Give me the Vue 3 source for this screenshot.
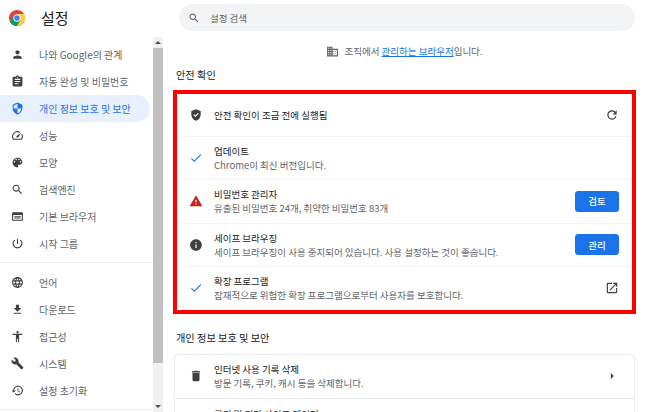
<script setup>
const icons = {
  person: 'M12 12c2.21 0 4-1.79 4-4s-1.79-4-4-4-4 1.79-4 4 1.79 4 4 4zm0 2c-2.67 0-8 1.34-8 4v2h16v-2c0-2.66-5.33-4-8-4z',
  assignment: 'M19 3h-4.18C14.4 1.84 13.3 1 12 1c-1.3 0-2.4.84-2.82 2H5c-1.1 0-2 .9-2 2v14c0 1.1.9 2 2 2h14c1.1 0 2-.9 2-2V5c0-1.1-.9-2-2-2zm-7 0c.55 0 1 .45 1 1s-.45 1-1 1-1-.45-1-1 .45-1 1-1zm2 14H7v-2h7v2zm3-4H7v-2h10v2zm0-4H7V7h10v2z',
  security: 'M12 1L3 5v6c0 5.55 3.84 10.74 9 12 5.16-1.26 9-6.45 9-12V5l-9-4zm0 10.99h7c-.53 4.12-3.28 7.79-7 8.94V12H5V6.3l7-3.11v8.8z',
  speed: 'M20.38 8.57l-1.23 1.85a8 8 0 0 1-.22 7.58H5.07A8 8 0 0 1 15.58 6.85l1.85-1.23A10 10 0 0 0 3.35 19a2 2 0 0 0 1.72 1h13.85a2 2 0 0 0 1.74-1 10 10 0 0 0-.27-10.44zm-9.79 6.84a2 2 0 0 0 2.83 0l5.66-8.49-8.49 5.66a2 2 0 0 0 0 2.83z',
  palette: 'M12 3c-4.97 0-9 4.03-9 9s4.03 9 9 9c.83 0 1.5-.67 1.5-1.5 0-.39-.15-.74-.39-1.01-.23-.26-.38-.61-.38-.99 0-.83.67-1.5 1.5-1.5H16c2.76 0 5-2.24 5-5 0-4.42-4.03-8-9-8zm-5.5 9c-.83 0-1.5-.67-1.5-1.5S5.67 9 6.5 9 8 9.67 8 10.5 7.33 12 6.5 12zm3-4C8.67 8 8 7.33 8 6.5S8.67 5 9.5 5s1.5.67 1.5 1.5S10.33 8 9.5 8zm5 0c-.83 0-1.5-.67-1.5-1.5S13.67 5 14.5 5s1.5.67 1.5 1.5S15.33 8 14.5 8zm3 4c-.83 0-1.5-.67-1.5-1.5S16.67 9 17.5 9s1.5.67 1.5 1.5-.67 1.5-1.5 1.5z',
  search: 'M15.5 14h-.79l-.28-.27C15.41 12.59 16 11.11 16 9.5 16 5.91 13.09 3 9.5 3S3 5.91 3 9.5 5.91 16 9.5 16c1.61 0 3.09-.59 4.23-1.57l.27.28v.79l5 4.99L20.49 19l-4.99-5zm-6 0C7.01 14 5 11.99 5 9.5S7.01 5 9.5 5 14 7.01 14 9.5 11.99 14 9.5 14z',
  asset: 'M20 4H4c-1.11 0-2 .9-2 2v12c0 1.1.89 2 2 2h16c1.1 0 2-.9 2-2V6c0-1.1-.89-2-2-2zm0 14H4V9h16v9zM6 11h12v1.5H6zm0 3h12v1.5H6z',
  power: 'M13 3h-2v10h2V3zm4.83 2.17l-1.42 1.42C17.99 7.86 19 9.81 19 12c0 3.87-3.13 7-7 7s-7-3.13-7-7c0-2.19 1.01-4.14 2.58-5.42L6.17 5.17C4.23 6.82 3 9.26 3 12c0 4.97 4.03 9 9 9s9-4.03 9-9c0-2.74-1.23-5.18-3.17-6.83z',
  language: 'M11.99 2C6.47 2 2 6.48 2 12s4.47 10 9.99 10C17.52 22 22 17.52 22 12S17.52 2 11.99 2zm6.93 6h-2.95c-.32-1.25-.78-2.45-1.38-3.56 1.84.63 3.37 1.91 4.33 3.56zM12 4.04c.83 1.2 1.48 2.53 1.91 3.96h-3.82c.43-1.43 1.08-2.76 1.91-3.96zM4.26 14C4.1 13.36 4 12.69 4 12s.1-1.36.26-2h3.38c-.08.66-.14 1.32-.14 2 0 .68.06 1.34.14 2H4.26zm.82 2h2.95c.32 1.25.78 2.45 1.38 3.56-1.84-.63-3.37-1.9-4.33-3.56zm2.95-8H5.08c.96-1.66 2.49-2.93 4.33-3.56C8.81 5.55 8.35 6.75 8.03 8zM12 19.96c-.83-1.2-1.48-2.53-1.91-3.96h3.82c-.43 1.43-1.08 2.76-1.91 3.96zM14.34 14H9.66c-.09-.66-.16-1.32-.16-2 0-.68.07-1.35.16-2h4.68c.09.65.16 1.32.16 2 0 .68-.07 1.34-.16 2zm.25 5.56c.6-1.11 1.06-2.31 1.38-3.56h2.95c-.96 1.65-2.49 2.93-4.33 3.56zM16.36 14c.08-.66.14-1.32.14-2 0-.68-.06-1.34-.14-2h3.38c.16.64.26 1.31.26 2s-.1 1.36-.26 2h-3.38z',
  download: 'M19 9h-4V3H9v6H5l7 7 7-7zM5 18v2h14v-2H5z',
  access: 'M12 2c1.1 0 2 .9 2 2s-.9 2-2 2-2-.9-2-2 .9-2 2-2zm9 7h-6v13h-2v-6h-2v6H9V9H3V7h18v2z',
  build: 'M22.7 19l-9.1-9.1c.9-2.3.4-5-1.5-6.9-2-2-5-2.4-7.4-1.3L9 6 6 9 1.6 4.7C.4 7.1.9 10.1 2.9 12.1c1.9 1.9 4.6 2.4 6.9 1.5l9.1 9.1c.4.4 1 .4 1.4 0l2.3-2.3c.5-.4.5-1.1.1-1.4z',
  restore: 'M13 3c-4.97 0-9 4.03-9 9H1l3.89 3.89.07.14L9 12H6c0-3.87 3.13-7 7-7s7 3.13 7 7-3.13 7-7 7c-1.93 0-3.68-.79-4.94-2.06l-1.42 1.42C8.27 19.99 10.51 21 13 21c4.97 0 9-4.03 9-9s-4.03-9-9-9zm-1 5v5l4.28 2.54.72-1.21-3.5-2.08V8H12z',
  domain: 'M12 7V3H2v18h20V7H12zM6 19H4v-2h2v2zm0-4H4v-2h2v2zm0-4H4V9h2v2zm0-4H4V5h2v2zm4 12H8v-2h2v2zm0-4H8v-2h2v2zm0-4H8V9h2v2zm0-4H8V5h2v2zm10 12h-8v-2h2v-2h-2v-2h2v-2h-2V9h8v10zm-2-8h-2v2h2v-2zm0 4h-2v2h2v-2z',
  refresh: 'M17.65 6.35C16.2 4.9 14.21 4 12 4c-4.42 0-7.99 3.58-7.99 8s3.57 8 7.99 8c3.73 0 6.84-2.55 7.73-6h-2.08c-.82 2.33-3.04 4-5.65 4-3.31 0-6-2.69-6-6s2.69-6 6-6c1.66 0 3.14.69 4.22 1.78L13 11h7V4l-2.35 2.35z',
  check: 'M9 16.17L4.83 12l-1.42 1.41L9 19 21 7l-1.41-1.41z',
  warning: 'M1 21h22L12 2 1 21zm12-3h-2v-2h2v2zm0-4h-2v-4h2v4z',
  info: 'M12 2C6.48 2 2 6.48 2 12s4.48 10 10 10 10-4.48 10-10S17.52 2 12 2zm1 15h-2v-6h2v6zm0-8h-2V7h2v2z',
  open: 'M19 19H5V5h7V3H5c-1.11 0-2 .9-2 2v14c0 1.1.89 2 2 2h14c1.1 0 2-.9 2-2v-7h-2v7zM14 3v2h3.59l-9.83 9.83 1.41 1.41L19 6.41V10h2V3h-7z',
  trash: 'M6 19c0 1.1.9 2 2 2h8c1.1 0 2-.9 2-2V7H6v12zM19 4h-3.5l-1-1h-5l-1 1H5v2h14V4z',
  shield: 'M12 2L4 5v6.09c0 5.05 3.41 9.76 8 10.91 4.59-1.15 8-5.86 8-10.91V5l-8-3zm-1.06 13.54L7.4 12l1.41-1.41 2.12 2.12 4.24-4.24 1.41 1.41-5.64 5.66z',
  arrow: 'M10 17l5-5-5-5v10z'
}

const navTop = [
  { icon: 'person', label: '나와 Google의 관계' },
  { icon: 'assignment', label: '자동 완성 및 비밀번호' },
  { icon: 'security', label: '개인 정보 보호 및 보안', active: true },
  { icon: 'speed', label: '성능' },
  { icon: 'palette', label: '모양' },
  { icon: 'search', label: '검색엔진' },
  { icon: 'asset', label: '기본 브라우저' },
  { icon: 'power', label: '시작 그룹' }
]

const navBottom = [
  { icon: 'language', label: '언어' },
  { icon: 'download', label: '다운로드' },
  { icon: 'access', label: '접근성' },
  { icon: 'build', label: '시스템' },
  { icon: 'restore', label: '설정 초기화' }
]

const checks = [
  { icon: 'shield', title: '안전 확인이 조금 전에 실행됨', side: 'refresh' },
  { icon: 'check', color: 'blue', title: '업데이트', sub: 'Chrome이 최신 버전입니다.' },
  { icon: 'warning', color: 'red', title: '비밀번호 관리자', sub: '유출된 비밀번호 24개, 취약한 비밀번호 83개', button: '검토' },
  { icon: 'info', title: '세이프 브라우징', sub: '세이프 브라우징이 사용 중지되어 있습니다. 사용 설정하는 것이 좋습니다.', button: '관리' },
  { icon: 'check', color: 'blue', title: '확장 프로그램', sub: '잠재적으로 위험한 확장 프로그램으로부터 사용자를 보호합니다.', side: 'open' }
]

const privacy = [
  { icon: 'trash', title: '인터넷 사용 기록 삭제', sub: '방문 기록, 쿠키, 캐시 등을 삭제합니다.', side: 'arrow' },
  { icon: 'trash', title: '쿠키 및 기타 사이트 데이터', side: 'arrow' }
]
</script>

<template>
  <div class="page">
    <aside class="sidebar">
      <div class="brand">
        <svg class="logo" viewBox="0 0 48 48">
          <circle cx="24" cy="24" r="24" fill="#db4437" />
          <path d="M24 24 L45 36 A24 24 0 0 1 24 48 A24 24 0 0 1 3 36 L13 18 Z" fill="#0f9d58" />
          <path d="M24 12 L45 12 A24 24 0 0 1 45 36 A24 24 0 0 1 24 48 L34.4 30 Z" fill="#ffcd40" />
          <circle cx="24" cy="24" r="11" fill="#fff" />
          <circle cx="24" cy="24" r="8.5" fill="#4285f4" />
        </svg>
        <h1>설정</h1>
      </div>
      <div class="side-body">
        <nav class="nav">
          <a v-for="item in navTop" :key="item.label" class="nav-item" :class="{ active: item.active }">
            <svg class="nav-icon" viewBox="0 0 24 24"><path :d="icons[item.icon]" /></svg>
            <span>{{ item.label }}</span>
          </a>
          <div class="nav-line"></div>
          <a v-for="item in navBottom" :key="item.label" class="nav-item">
            <svg class="nav-icon" viewBox="0 0 24 24"><path :d="icons[item.icon]" /></svg>
            <span>{{ item.label }}</span>
          </a>
          <div class="nav-line last"></div>
        </nav>
        <div class="scrollbar">
          <div class="sb-btn"><i class="up"></i></div>
          <div class="sb-thumb"></div>
          <div class="sb-rest"></div>
          <div class="sb-btn"><i class="down"></i></div>
        </div>
      </div>
    </aside>

    <main class="main">
      <div class="search">
        <svg class="search-icon" viewBox="0 0 24 24"><path :d="icons.search" /></svg>
        <span>설정 검색</span>
      </div>

      <p class="notice">
        <svg class="domain" viewBox="0 0 24 24"><path :d="icons.domain" /></svg>
        <span>조직에서 <a href="#">관리하는 브라우저</a>입니다.</span>
      </p>

      <h2 class="title">안전 확인</h2>
      <section class="check-box">
        <div v-for="row in checks" :key="row.title" class="row">
          <svg class="row-icon" :class="row.color" viewBox="0 0 24 24"><path :d="icons[row.icon]" /></svg>
          <div class="row-text">
            <div class="row-title">{{ row.title }}</div>
            <div v-if="row.sub" class="row-sub">{{ row.sub }}</div>
          </div>
          <button v-if="row.button" class="btn">{{ row.button }}</button>
          <svg v-if="row.side" class="row-icon side" viewBox="0 0 24 24"><path :d="icons[row.side]" /></svg>
        </div>
      </section>

      <h2 class="title second">개인 정보 보호 및 보안</h2>
      <section class="card">
        <div v-for="row in privacy" :key="row.title" class="row tall">
          <svg class="row-icon" viewBox="0 0 24 24"><path :d="icons[row.icon]" /></svg>
          <div class="row-text">
            <div class="row-title">{{ row.title }}</div>
            <div v-if="row.sub" class="row-sub">{{ row.sub }}</div>
          </div>
          <svg class="row-icon side" viewBox="0 0 24 24"><path :d="icons[row.side]" /></svg>
        </div>
      </section>
    </main>
  </div>
</template>

<style>
html, body {
  margin: 0;
  background: #fff;
}
</style>

<style scoped>
.page {
  width: 650px;
  height: 412px;
  display: flex;
  overflow: hidden;
  background: #fff;
  font-family: "Noto Sans CJK KR", "Liberation Sans", sans-serif;
  font-size: 9.5px;
  color: #202124;
}

.sidebar {
  width: 163px;
  flex: none;
  display: flex;
  flex-direction: column;
}

.brand {
  height: 37px;
  flex: none;
  display: flex;
  align-items: center;
  padding: 0 0 2px 9px;
  box-sizing: border-box;
}

.logo {
  width: 16px;
  height: 16px;
}

.brand h1 {
  margin: 0 0 0 16px;
  font-size: 15px;
  font-weight: 400;
  line-height: 30px;
}

.side-body {
  flex: 1;
  display: flex;
  min-height: 0;
}

.nav {
  width: 153px;
  padding-top: 4px;
  box-sizing: border-box;
  font-size: 10px;
}

.nav-item {
  height: 27px;
  width: 150px;
  display: flex;
  align-items: center;
  padding-left: 11px;
  box-sizing: border-box;
  color: #5f6368;
  border-radius: 0 14px 14px 0;
}

.nav-item.active {
  background: #e8f0fe;
  color: #1a73e8;
}

.nav-icon {
  width: 13px;
  height: 13px;
  flex: none;
  margin-right: 15px;
  fill: #3c4043;
}

.active .nav-icon {
  fill: #1a73e8;
}

.nav-line {
  height: 1px;
  background: #f1f1f1;
  margin: 5px 0 6px;
}

.nav-line.last {
  margin-bottom: 0;
}

.scrollbar {
  width: 10px;
  flex: none;
  display: flex;
  flex-direction: column;
  background: #f1f1f1;
}

.sb-btn {
  height: 11px;
  flex: none;
  display: flex;
  align-items: center;
  justify-content: center;
}

.sb-btn i {
  width: 0;
  height: 0;
  border-left: 3px solid transparent;
  border-right: 3px solid transparent;
}

.sb-btn .up {
  border-bottom: 3px solid #505050;
}

.sb-btn .down {
  border-top: 3px solid #505050;
}

.sb-thumb {
  height: 315px;
  flex: none;
  background: #c1c1c1;
}

.sb-rest {
  flex: 1;
}

.main {
  flex: 1;
  min-width: 0;
  padding: 4px 14px 0 10px;
}

.search {
  height: 27px;
  margin: 0 1px 0 6px;
  display: flex;
  align-items: center;
  padding-left: 9px;
  background: #f1f3f4;
  border-radius: 14px;
  color: #5f6368;
}

.search-icon {
  width: 12px;
  height: 12px;
  margin-right: 10px;
  fill: #5f6368;
}

.notice {
  margin: 12px 0 8px;
  height: 16px;
  display: flex;
  align-items: center;
  justify-content: center;
  color: #5f6368;
}

.notice a {
  color: #1a73e8;
}

.domain {
  width: 13px;
  height: 13px;
  margin-right: 5px;
  fill: #5f6368;
}

.title {
  margin: 0 0 7px 3px;
  height: 16px;
  font-size: 10.2px;
  font-weight: 400;
  line-height: 16px;
}

.title.second {
  margin-top: 16px;
  margin-bottom: 9px;
}

.check-box {
  border: 4px solid #f00;
}

.card {
  margin: 0 2px;
  border-radius: 4px;
  box-shadow: 0 0 2px rgba(60, 64, 67, 0.35);
}

.row {
  height: 43.2px;
  box-sizing: border-box;
  display: flex;
  align-items: center;
  padding: 0 13px 0 12px;
  border-bottom: 1px solid #f1f3f4;
}

.row:last-child {
  border-bottom: 0;
}

.row.tall {
  height: 44px;
  padding: 0 15px 0 14px;
  border-bottom-color: #e8eaed;
}

.row.tall .row-text {
  min-height: 28px;
}

.row-icon {
  width: 14px;
  height: 14px;
  flex: none;
  fill: #3c4043;
}

.row-icon.blue {
  fill: #1a73e8;
}

.row-icon.red {
  fill: #c5221f;
}

.row-text {
  flex: 1;
  min-width: 0;
  margin-left: 11px;
  line-height: 14px;
  white-space: nowrap;
}

.row-sub {
  color: #5f6368;
}

.btn {
  width: 44px;
  height: 21px;
  flex: none;
  padding: 0;
  border: 1px solid #1a73e8;
  border-radius: 3px;
  background: #1a73e8;
  color: #fff;
  font: inherit;
  font-weight: 500;
}
</style>
